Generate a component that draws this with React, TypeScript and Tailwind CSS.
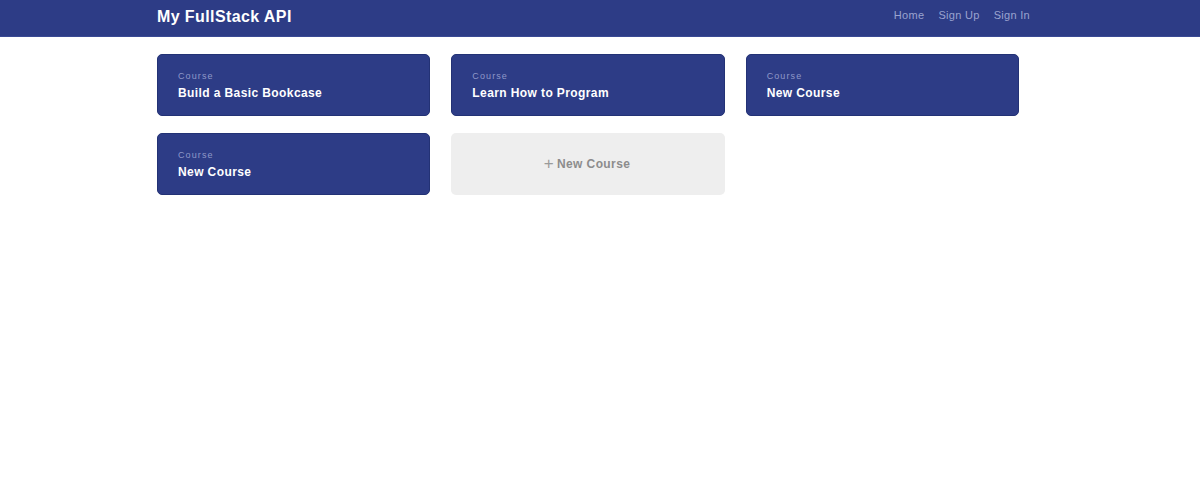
import React from "react";

const courses = ["Build a Basic Bookcase", "Learn How to Program", "New Course", "New Course"];

export default function App() {
  return (
    <div className="min-h-[500px] bg-white" style={{ fontFamily: '"Liberation Sans", Arial, sans-serif' }}>
      <header className="h-[37px] bg-[#2d3c86] border-b border-[#3a4a94]">
        <div className="ml-[157px] w-[873px] h-[36px] flex items-center justify-between">
          <div className="text-white font-bold text-[16px] tracking-[0.4px] -mt-[3px]">My FullStack API</div>
          <nav className="flex gap-[14px] text-[11px] text-[#9aa3cf] tracking-[0.3px] -mt-[5px]">
            <span>Home</span>
            <span>Sign Up</span>
            <span>Sign In</span>
          </nav>
        </div>
      </header>
      <main className="ml-[157px] w-[862px] pt-[17px] grid grid-cols-3 gap-x-[21px] gap-y-[17px]">
        {courses.map((c, i) => (
          <div key={i} className="h-[62px] rounded-[5px] bg-[#2d3c86] border border-[#233275] pl-[20px] pt-[17px]">
            <div className="text-[9px] text-[#8f98c8] tracking-[1.1px] leading-none">Course</div>
            <div className="mt-[6px] text-white font-bold text-[12px] tracking-[0.4px] leading-none">{c}</div>
          </div>
        ))}
        <div className="h-[62px] rounded-[5px] bg-[#eeeeee] flex items-center justify-center text-[#8c8c8c] text-[12px] font-bold tracking-[0.4px] pr-[2px]">
          <span className="font-light text-[17px] mr-[3px] leading-none -mt-[2px] text-[#9a9a9a]">+</span>New Course
        </div>
      </main>
    </div>
  );
}
